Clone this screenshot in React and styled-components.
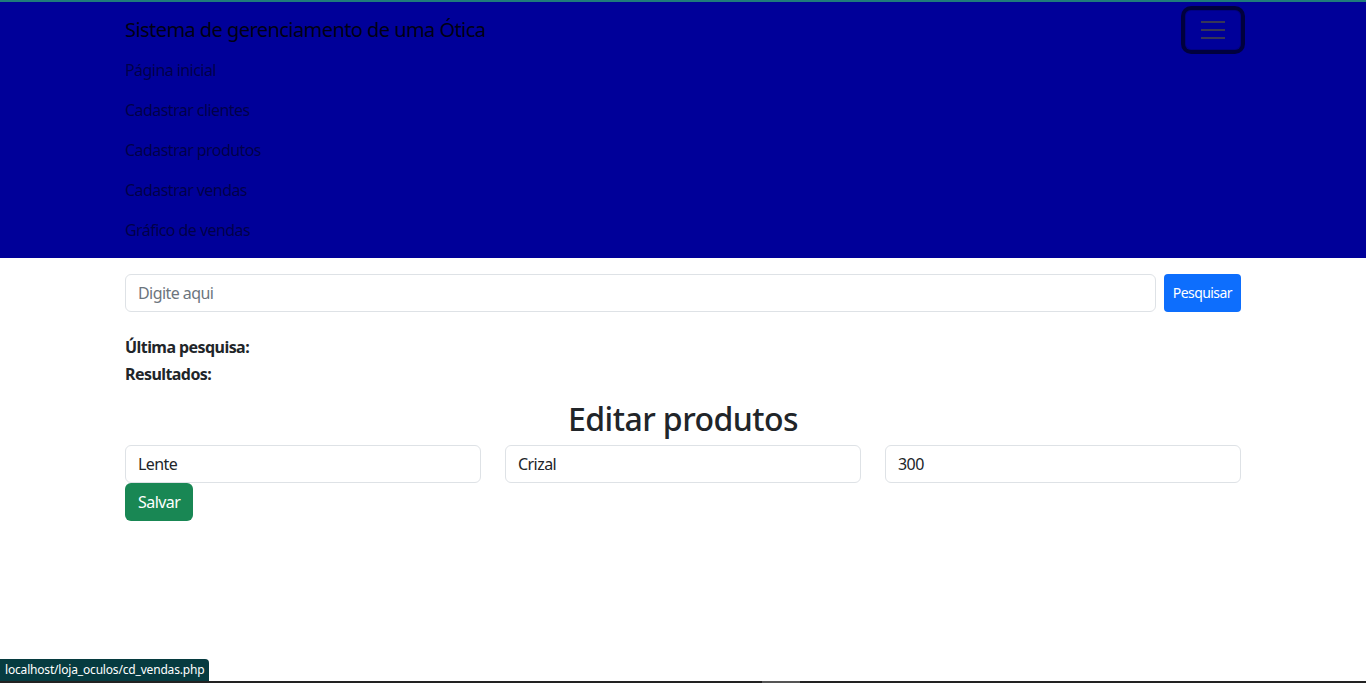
import styled, { createGlobalStyle } from "styled-components"

const Global = createGlobalStyle`
    * { box-sizing: border-box; }
    html, body { margin: 0; padding: 0; background: #fff; }
    body {
        font-family: "Noto Sans", "Segoe UI", sans-serif;
        font-size: 16px;
        line-height: 1.5;
        letter-spacing: -0.035em;
        color: #212529;
    }
    input, button { letter-spacing: inherit; }
`

const Topo = styled.nav`
    background-color: #000099;
    border-top: 2px solid #1f7b7b;
    padding: 8px 0 8px;
`

const Container = styled.div`
    width: 1140px;
    margin: 0 auto;
    padding: 0 12px;
`

const LinhaMarca = styled.div`
    display: flex;
    justify-content: space-between;
    align-items: center;
`

const Marca = styled.a`
    font-size: 20px;
    line-height: 30px;
    padding: 5px 0;
    color: rgba(0, 0, 0, 0.9);
    text-decoration: none;
`

const Hamburguer = styled.button`
    width: 56px;
    height: 40px;
    padding: 4px 12px;
    background: transparent;
    border: 1px solid rgba(0, 0, 0, 0.15);
    border-radius: 6px;
    box-shadow: 0 0 0 4px rgba(0, 0, 0, 0.6);
    display: flex;
    flex-direction: column;
    justify-content: center;
    align-items: center;
    gap: 6px;

    span {
        display: block;
        width: 24px;
        height: 2px;
        background: rgba(60, 60, 80, 0.9);
    }
`

const Menu = styled.ul`
    list-style: none;
    margin: 0;
    padding: 0;
`

const Link = styled.a`
    display: block;
    padding: 8px 0;
    line-height: 24px;
    color: rgba(0, 0, 0, 0.55);
    text-decoration: none;
`

const Principal = styled.main`
    padding-top: 16px;
`

const FormBusca = styled.form`
    display: flex;
    gap: 8px;
`

const Campo = styled.input`
    width: 100%;
    height: 38px;
    padding: 6px 12px;
    font-family: inherit;
    font-size: 16px;
    line-height: 24px;
    color: #212529;
    border: 1px solid #dee2e6;
    border-radius: 6px;
    outline: none;

    &::placeholder { color: #6c757d; }
`

const Botao = styled.button`
    font-family: inherit;
    color: #fff;
    border: 0;
    border-radius: ${p => p.$pequeno ? "4px" : "6px"};
    background-color: ${p => p.$cor};
    font-size: ${p => p.$pequeno ? "14px" : "16px"};
    padding: ${p => p.$pequeno ? "4px 9px" : "6px 13px"};
    height: 38px;
    line-height: 24px;
    white-space: nowrap;
`

const Info = styled.div`
    margin-top: 22px;

    p {
        margin: 0;
        font-weight: 700;
        line-height: 27px;
    }
`

const Titulo = styled.h2`
    font-size: 32px;
    font-weight: 500;
    line-height: 1.2;
    text-align: center;
    margin: 12px 0 7px;
`

const LinhaCampos = styled.div`
    display: grid;
    grid-template-columns: repeat(3, 1fr);
    column-gap: 24px;
`

const Status = styled.div`
    position: fixed;
    left: 0;
    bottom: 2px;
    height: 22px;
    background: #063b40;
    color: #fff;
    font-family: "Noto Sans", sans-serif;
    font-size: 12px;
    line-height: 22px;
    letter-spacing: -0.015em;
    padding: 0 5px;
    border-top-right-radius: 4px;
`

const Rodape = styled.div`
    position: fixed;
    left: 0;
    right: 0;
    bottom: 0;
    height: 2px;
    background: #222;

    &::after {
        content: "";
        position: absolute;
        left: 762px;
        width: 38px;
        top: 0;
        bottom: 0;
        background: #555;
    }
`

const links = ["Página inicial", "Cadastrar clientes", "Cadastrar produtos", "Cadastrar vendas", "Gráfico de vendas"]

const App = () => {
    return (
        <>
            <Global />
            <Topo>
                <Container>
                    <LinhaMarca>
                        <Marca href="#">Sistema de gerenciamento de uma Ótica</Marca>
                        <Hamburguer type="button"><span /><span /><span /></Hamburguer>
                    </LinhaMarca>
                    <Menu>
                        {links.map(l => <li key={l}><Link href="#">{l}</Link></li>)}
                    </Menu>
                </Container>
            </Topo>
            <Principal>
                <Container>
                    <FormBusca onSubmit={e => e.preventDefault()}>
                        <Campo type="text" placeholder="Digite aqui" />
                        <Botao $pequeno $cor="#0d6efd">Pesquisar</Botao>
                    </FormBusca>
                    <Info>
                        <p>Última pesquisa:</p>
                        <p>Resultados:</p>
                    </Info>
                    <Titulo>Editar produtos</Titulo>
                    <LinhaCampos>
                        <Campo type="text" defaultValue="Lente" />
                        <Campo type="text" defaultValue="Crizal" />
                        <Campo type="text" defaultValue="300" />
                    </LinhaCampos>
                    <Botao $cor="#198754">Salvar</Botao>
                </Container>
            </Principal>
            <Status>localhost/loja_oculos/cd_vendas.php</Status>
            <Rodape />
        </>
    )
}

export default App
